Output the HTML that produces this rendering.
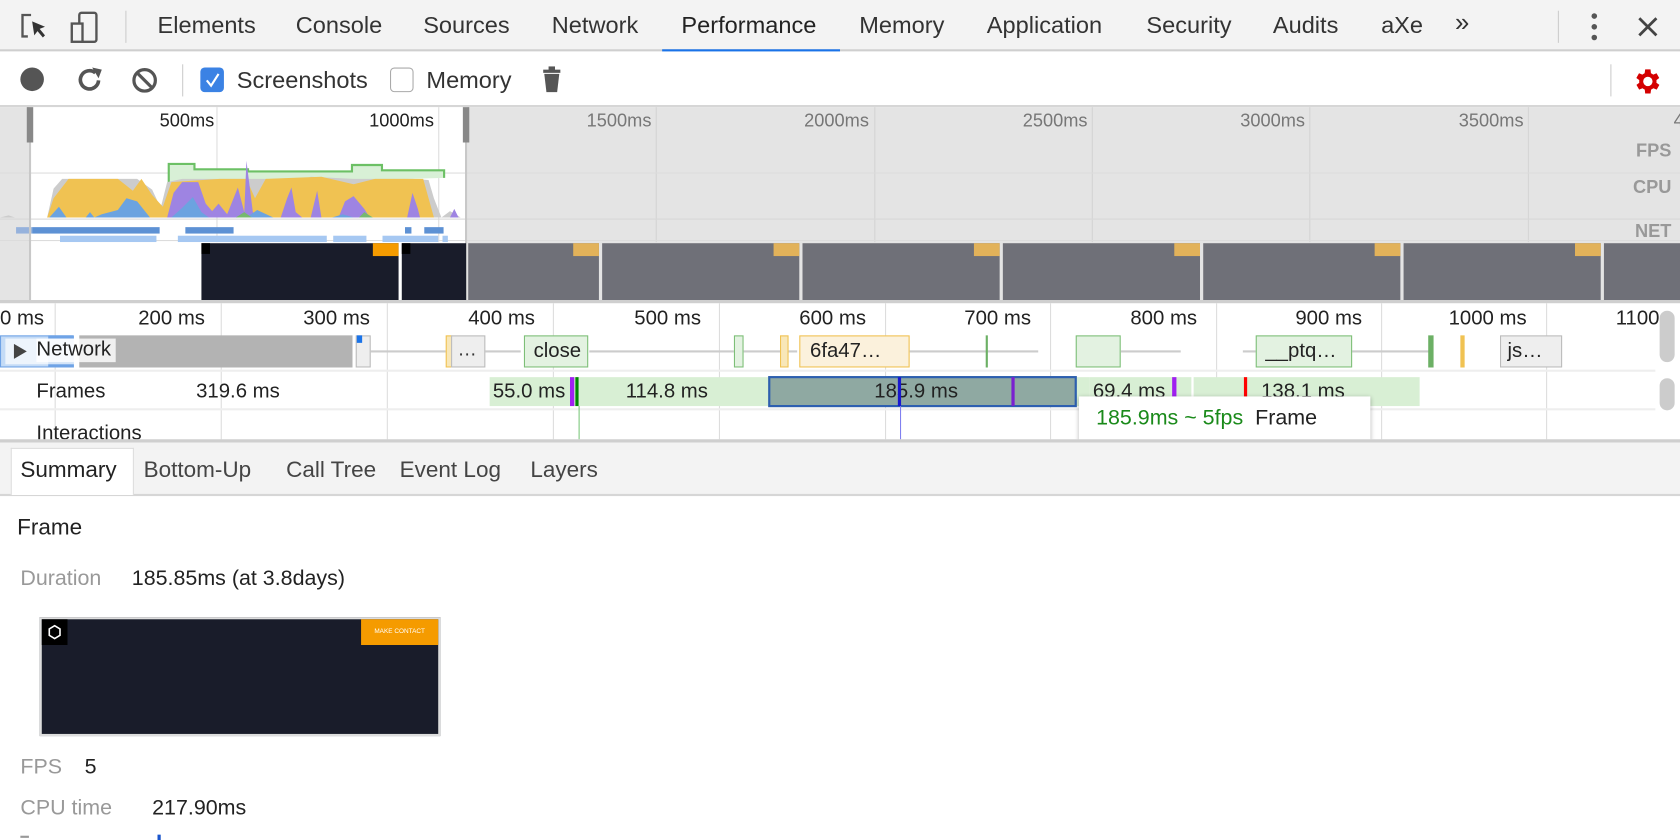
<!DOCTYPE html>
<html><head><meta charset="utf-8"><style>
*{box-sizing:border-box;margin:0;padding:0}
html,body{width:1680px;height:840px;overflow:hidden;background:#fff}
#w{position:absolute;left:0;top:0;width:1568px;height:784px;transform:scale(1.071429);transform-origin:0 0;font-family:"Liberation Sans",sans-serif;color:#333}
.a{position:absolute;white-space:nowrap}
.tab{position:absolute;top:11px;font-size:22px;color:#333}
.lbl{font-size:19px;color:#222}
.rl{position:absolute;top:287px;font-size:19px;color:#222}
.gl{position:absolute;width:1px;background:#ddd}
</style></head><body><div id="w">
<div class="a" style="left:0;top:0;width:1568px;height:48px;background:#f3f3f3;border-bottom:2px solid #cfcfcf"></div>
<svg class="a" style="left:16px;top:10px" width="90" height="32" viewBox="0 0 90 32"><path d="M13 4H5v20h5" fill="none" stroke="#555" stroke-width="2.2"/><path d="M14 10l12 5-5 2 5 6-2 2-5-6-3 4z" fill="#333"/><rect x="58" y="2" width="16" height="27" rx="2" fill="none" stroke="#555" stroke-width="2.2"/><rect x="51" y="12" width="10" height="17" fill="#f3f3f3" stroke="#555" stroke-width="2.2"/></svg>
<div class="a" style="left:117px;top:10px;width:1px;height:30px;background:#ccc"></div>
<div class="tab" style="left:147px">Elements</div>
<div class="tab" style="left:276px">Console</div>
<div class="tab" style="left:395px">Sources</div>
<div class="tab" style="left:515px">Network</div>
<div class="tab" style="left:636px;color:#222">Performance</div>
<div class="a" style="left:618px;top:46px;width:166px;height:3px;background:#1a73e8"></div>
<div class="tab" style="left:802px">Memory</div>
<div class="tab" style="left:921px">Application</div>
<div class="tab" style="left:1070px">Security</div>
<div class="tab" style="left:1188px">Audits</div>
<div class="tab" style="left:1289px">aXe</div>
<div class="tab" style="left:1358px;font-size:24px;top:8px">»</div>
<div class="a" style="left:1454px;top:10px;width:1px;height:30px;background:#ccc"></div>
<svg class="a" style="left:1480px;top:12px" width="16" height="28"><circle cx="8" cy="3" r="2.6" fill="#555"/><circle cx="8" cy="13" r="2.6" fill="#555"/><circle cx="8" cy="23" r="2.6" fill="#555"/></svg>
<svg class="a" style="left:1527px;top:14px" width="22" height="22"><path d="M3 3L19 19M19 3L3 19" stroke="#444" stroke-width="2.6"/></svg>
<div class="a" style="left:0;top:48px;width:1568px;height:52px;background:#fff;border-bottom:2px solid #d6d6d6"></div>
<svg class="a" style="left:16px;top:60px" width="520" height="30"><circle cx="14" cy="14" r="11" fill="#555"/><path d="M73 8a8.5 8.5 0 1 0 3 7" fill="none" stroke="#555" stroke-width="3.4"/><path d="M70 3l9 2-3 8z" fill="#555"/><circle cx="119" cy="15" r="10" fill="none" stroke="#555" stroke-width="3"/><path d="M112 8l14 14" stroke="#555" stroke-width="3"/><rect x="491" y="5" width="16" height="3" fill="#555"/><rect x="496" y="2" width="6" height="4" fill="#555"/><path d="M492 9h14l-2 17h-10z" fill="#555"/></svg>
<div class="a" style="left:170px;top:60px;width:1px;height:30px;background:#ccc"></div>
<div class="a" style="left:187px;top:63px;width:22px;height:23px;border-radius:4px;background:#3b82e4"></div>
<svg class="a" style="left:190px;top:66px" width="16" height="18"><path d="M3 9l4 5 7-11" fill="none" stroke="#fff" stroke-width="2"/></svg>
<div class="a lbl" style="left:221px;top:62px;font-size:22px;color:#333">Screenshots</div>
<div class="a" style="left:364px;top:63px;width:22px;height:23px;border-radius:4px;border:1px solid #aaa;background:#fff"></div>
<div class="a lbl" style="left:398px;top:62px;font-size:22px;color:#333">Memory</div>
<div class="a" style="left:1503px;top:60px;width:1px;height:30px;background:#ccc"></div>
<svg class="a" style="left:1523px;top:61px" width="30" height="30" viewBox="0 0 24 24"><path fill="#d40000" d="M19.4 13a7.5 7.5 0 0 0 0-2l2.1-1.6-2-3.5-2.5 1a7 7 0 0 0-1.7-1L15 3h-4l-.4 2.9a7 7 0 0 0-1.7 1l-2.5-1-2 3.5L6.6 11a7.5 7.5 0 0 0 0 2l-2.1 1.6 2 3.5 2.5-1a7 7 0 0 0 1.7 1L11 21h4l.4-2.9a7 7 0 0 0 1.7-1l2.5 1 2-3.5zM13 15.5a3.5 3.5 0 1 1 0-7 3.5 3.5 0 0 1 0 7z" transform="translate(-1 0)"/></svg>
<div class="a" style="left:0;top:100px;width:1568px;height:182px;background:#e4e4e4"></div>
<div class="a" style="left:27px;top:100px;width:409px;height:182px;background:#fff"></div>
<div class="gl" style="left:202px;top:100px;height:126px"></div>
<div class="gl" style="left:409px;top:100px;height:126px"></div>
<div class="gl" style="left:612px;top:100px;height:126px;background:#d4d4d4"></div>
<div class="gl" style="left:816px;top:100px;height:126px;background:#d4d4d4"></div>
<div class="gl" style="left:1019px;top:100px;height:126px;background:#d4d4d4"></div>
<div class="gl" style="left:1222px;top:100px;height:126px;background:#d4d4d4"></div>
<div class="gl" style="left:1426px;top:100px;height:126px;background:#d4d4d4"></div>
<div class="a" style="left:0;top:161px;width:1568px;height:1px;background:#dcdcdc"></div>
<div class="a" style="left:0;top:204px;width:1568px;height:1px;background:#d8d8d8"></div>
<div class="a" style="left:0;top:224px;width:1568px;height:1px;background:#dcdcdc"></div>
<div class="a" style="left:140px;top:103px;width:60px;text-align:right;font-size:17px;color:#222">500ms</div>
<div class="a" style="left:330px;top:103px;width:75px;text-align:right;font-size:17px;color:#222">1000ms</div>
<div class="a" style="left:530px;top:103px;width:78px;text-align:right;font-size:17px;color:#777">1500ms</div>
<div class="a" style="left:733px;top:103px;width:78px;text-align:right;font-size:17px;color:#777">2000ms</div>
<div class="a" style="left:937px;top:103px;width:78px;text-align:right;font-size:17px;color:#777">2500ms</div>
<div class="a" style="left:1140px;top:103px;width:78px;text-align:right;font-size:17px;color:#777">3000ms</div>
<div class="a" style="left:1344px;top:103px;width:78px;text-align:right;font-size:17px;color:#777">3500ms</div>
<div class="a" style="left:1562px;top:103px;font-size:17px;color:#777">4</div>
<div class="a" style="left:1500px;top:131px;width:60px;text-align:right;font-size:17px;font-weight:bold;color:#999">FPS</div>
<div class="a" style="left:1500px;top:165px;width:60px;text-align:right;font-size:17px;font-weight:bold;color:#999">CPU</div>
<div class="a" style="left:1500px;top:206px;width:60px;text-align:right;font-size:17px;font-weight:bold;color:#999">NET</div>
<svg class="a" style="left:0;top:140px" width="440" height="86">
<path d="M157.5 33.5V13h24v5h50v2h97v-6h28v5h58v7" fill="#d8f0d6" stroke="#6cc065" stroke-width="2"/>
<path d="M0 63L8 61 14 63 44 63 50 36 58 27 128 27 142 37 150 54 156 30 170 27 250 27 268 35 290 25 330 27 385 27 400 28 405 45 412 63 420 57 430 63 440 63Z" fill="#cccccc"/>
<path d="M44 63L50 45 64 27 110 27 124 38 132 27 142 42 152 53 160 30 205 27 230 27 238 45 248 27 300 25 330 32 350 27 395 27 400 45 405 63Z" fill="#f0c252"/>
<path d="M156 63 162 40 170 30 185 30 192 50 198 57 204 50 212 60 222 35 228 58 230 10 236 58 240 63Z M262 63 268 45 272 35 276 58 282 63Z M316 63 322 48 330 43 340 55 345 63Z M290 63 296 38 300 63Z M380 63 385 40 390 55 392 63Z M420 63 424 55 428 63Z" fill="#9e84e2"/>
<path d="M46 63 55 53 62 63 80 63 84 58 88 63 95 60 110 56 118 45 128 48 140 63Z M160 63 170 54 180 44 188 58 195 63Z M230 63 240 56 255 63Z M310 63 320 60 330 63Z" fill="#6ba3e0"/>
<path d="M220 63 228 58 235 63Z M335 63 340 58 348 63Z" fill="#76b86f"/>
<rect x="15" y="72" width="15" height="6" fill="#96b2dc"/><rect x="30" y="72" width="119" height="6" fill="#5d91d4"/><rect x="173" y="72" width="45" height="6" fill="#5d91d4"/><rect x="378" y="72" width="6" height="6" fill="#5d91d4"/><rect x="396" y="72" width="18" height="6" fill="#5d91d4"/>
<rect x="56" y="80" width="90" height="6" fill="#a6c8f2"/><rect x="166" y="80" width="139" height="6" fill="#a6c8f2"/><rect x="311" y="80" width="31" height="6" fill="#a6c8f2"/><rect x="357" y="80" width="52" height="6" fill="#a6c8f2"/><rect x="413" y="80" width="5" height="6" fill="#a6c8f2"/>
</svg>
<div class="a" style="left:25px;top:100px;width:6px;height:33px;background:#888"></div>
<div class="a" style="left:432px;top:100px;width:6px;height:33px;background:#888"></div>
<div class="a" style="left:27px;top:133px;width:2px;height:149px;background:#c8c8c8"></div>
<div class="a" style="left:434px;top:133px;width:2px;height:149px;background:#c8c8c8"></div>
<div class="a" style="left:188px;top:227px;width:184px;height:53px;background:#191c2a"><div class="a" style="left:0;top:0;width:8px;height:10px;background:#000"></div><div class="a" style="right:0;top:0;width:24px;height:12px;background:#f59b00"></div></div>
<div class="a" style="left:375px;top:227px;width:60px;height:53px;background:#191c2a"><div class="a" style="left:0;top:0;width:8px;height:10px;background:#000"></div></div>
<div class="a" style="left:437px;top:227px;width:122px;height:53px;background:#6f7078"><div class="a" style="right:0;top:0;width:24px;height:12px;background:#e2b25a"></div></div>
<div class="a" style="left:562px;top:227px;width:184px;height:53px;background:#6f7078"><div class="a" style="right:0;top:0;width:24px;height:12px;background:#e2b25a"></div></div>
<div class="a" style="left:749px;top:227px;width:184px;height:53px;background:#6f7078"><div class="a" style="right:0;top:0;width:24px;height:12px;background:#e2b25a"></div></div>
<div class="a" style="left:936px;top:227px;width:184px;height:53px;background:#6f7078"><div class="a" style="right:0;top:0;width:24px;height:12px;background:#e2b25a"></div></div>
<div class="a" style="left:1123px;top:227px;width:184px;height:53px;background:#6f7078"><div class="a" style="right:0;top:0;width:24px;height:12px;background:#e2b25a"></div></div>
<div class="a" style="left:1310px;top:227px;width:184px;height:53px;background:#6f7078"><div class="a" style="right:0;top:0;width:24px;height:12px;background:#e2b25a"></div></div>
<div class="a" style="left:1497px;top:227px;width:71px;height:53px;background:#6f7078"></div>
<div class="a" style="left:0;top:280px;width:1568px;height:3px;background:#cfcfcf"></div>
<div class="gl" style="left:51px;top:283px;height:128px"></div>
<div class="gl" style="left:206px;top:283px;height:128px"></div>
<div class="gl" style="left:361px;top:283px;height:128px"></div>
<div class="gl" style="left:516px;top:283px;height:128px"></div>
<div class="gl" style="left:671px;top:283px;height:128px"></div>
<div class="gl" style="left:826px;top:283px;height:128px"></div>
<div class="gl" style="left:980px;top:283px;height:128px"></div>
<div class="gl" style="left:1135px;top:283px;height:128px"></div>
<div class="gl" style="left:1289px;top:283px;height:128px"></div>
<div class="gl" style="left:1443px;top:283px;height:128px"></div>
<div class="rl" style="left:0">0 ms</div>
<div class="rl" style="left:129px">200 ms</div>
<div class="rl" style="left:283px">300 ms</div>
<div class="rl" style="left:437px">400 ms</div>
<div class="rl" style="left:592px">500 ms</div>
<div class="rl" style="left:746px">600 ms</div>
<div class="rl" style="left:900px">700 ms</div>
<div class="rl" style="left:1055px">800 ms</div>
<div class="rl" style="left:1209px">900 ms</div>
<div class="rl" style="left:1352px">1000 ms</div>
<div class="rl" style="left:1508px">1100</div>
<div class="a" style="left:0;top:345px;width:1545px;height:2px;background:#eee"></div>
<div class="a" style="left:0;top:381px;width:1545px;height:2px;background:#eee"></div>
<div class="a" style="left:0;top:313px;width:68px;height:30px;background:#c4dbf6;border:1px solid #6fa3e6"></div>
<div class="a" style="left:45px;top:313px;width:24px;height:30px;background:#6fa3e6"></div>
<div class="a" style="left:5px;top:316px;width:76px;height:24px;background:rgba(255,255,255,.7)"></div>
<div class="a" style="left:74px;top:313px;width:255px;height:30px;background:#b3b3b3"></div>
<div class="a" style="left:332px;top:313px;width:14px;height:30px;background:#eee;border:1px solid #bbb"></div>
<div class="a" style="left:333px;top:313px;width:5px;height:7px;background:#1a73e8"></div>
<div class="a" style="left:346px;top:327px;width:140px;height:2px;background:#ccc"></div>
<div class="a" style="left:416px;top:313px;width:6px;height:30px;background:#f8e7b8;border:1px solid #f0c252"></div>
<div class="a" style="left:421px;top:313px;width:32px;height:30px;background:#eee;border:1px solid #bbb;font-size:18px;padding:2px 0 0 5px">…</div>
<div class="a" style="left:489px;top:313px;width:60px;height:30px;background:#e3f2e1;border:1px solid #7dbf77;font-size:19px;padding:3px 0 0 8px;color:#222">close</div>
<div class="a" style="left:550px;top:327px;width:135px;height:2px;background:#ccc"></div>
<div class="a" style="left:685px;top:313px;width:9px;height:30px;background:#e3f2e1;border:1px solid #7dbf77"></div>
<div class="a" style="left:694px;top:327px;width:50px;height:2px;background:#ccc"></div>
<div class="a" style="left:728px;top:313px;width:8px;height:30px;background:#f8e7b8;border:1px solid #f0c252"></div>
<div class="a" style="left:746px;top:313px;width:103px;height:30px;background:#fbf1dc;border:1px solid #f0c252;font-size:19px;padding:3px 0 0 9px;color:#222">6fa47…</div>
<div class="a" style="left:849px;top:327px;width:120px;height:2px;background:#ccc"></div>
<div class="a" style="left:920px;top:313px;width:2px;height:30px;background:#6cb065"></div>
<div class="a" style="left:1004px;top:313px;width:42px;height:30px;background:#e3f2e1;border:1px solid #7dbf77"></div>
<div class="a" style="left:1046px;top:327px;width:56px;height:2px;background:#ccc"></div>
<div class="a" style="left:1160px;top:327px;width:176px;height:2px;background:#ccc"></div>
<div class="a" style="left:1172px;top:313px;width:90px;height:30px;background:#e3f2e1;border:1px solid #7dbf77;font-size:19px;padding:3px 0 0 8px;color:#222">__ptq…</div>
<div class="a" style="left:1333px;top:313px;width:5px;height:30px;background:#6cb065"></div>
<div class="a" style="left:1363px;top:313px;width:4px;height:30px;background:#f0c252"></div>
<div class="a" style="left:1400px;top:313px;width:58px;height:30px;background:#eee;border:1px solid #bbb;font-size:19px;padding:3px 0 0 6px;color:#222">js…</div>
<svg class="a" style="left:12px;top:320px" width="14" height="16"><path d="M1 1L13 8 1 15z" fill="#444"/></svg>
<div class="a lbl" style="left:34px;top:316px;background:rgba(255,255,255,.8);padding:0 4px 0 0">Network</div>
<div class="a lbl" style="left:34px;top:355px">Frames</div>
<div class="a lbl" style="left:183px;top:355px">319.6 ms</div>
<div class="a" style="left:457px;top:352px;width:560px;height:27px;background:#d8efd4"></div>
<div class="a" style="left:1114px;top:352px;width:211px;height:27px;background:#d8efd4"></div>
<div class="a" style="left:1017px;top:352px;width:95px;height:27px;background:#d8efd4"></div>
<div class="a" style="left:1112px;top:352px;width:2px;height:27px;background:#fff"></div>
<div class="a lbl" style="left:460px;top:355px">55.0 ms</div>
<div class="a" style="left:532px;top:352px;width:4px;height:27px;background:#a020f0"></div>
<div class="a" style="left:537px;top:352px;width:3px;height:27px;background:#080"></div>
<div class="a" style="left:540px;top:379px;width:1px;height:32px;background:#7bc77a"></div>
<div class="a lbl" style="left:584px;top:355px">114.8 ms</div>
<div class="a" style="left:717px;top:351px;width:288px;height:29px;background:#8fa9a2;border:2px solid #2d5fb0"></div>
<div class="a lbl" style="left:816px;top:355px">185.9 ms</div>
<div class="a" style="left:838px;top:352px;width:3px;height:27px;background:#1818d0"></div>
<div class="a" style="left:840px;top:379px;width:1px;height:32px;background:#8080f0"></div>
<div class="a" style="left:944px;top:352px;width:3px;height:27px;background:#7a20d0"></div>
<div class="a lbl" style="left:1020px;top:355px">69.4 ms</div>
<div class="a" style="left:1094px;top:352px;width:4px;height:27px;background:#a020f0"></div>
<div class="a" style="left:1161px;top:352px;width:3px;height:27px;background:#f00"></div>
<div class="a lbl" style="left:1177px;top:355px">138.1 ms</div>
<div class="a lbl" style="left:34px;top:394px">Interactions</div>
<div class="a" style="left:1007px;top:370px;width:272px;height:42px;background:#fff;box-shadow:0 1px 4px rgba(0,0,0,.3)"></div>
<div class="a" style="left:1023px;top:379px;font-size:20px;color:#1a8a1a">185.9ms ~ 5fps <span style="color:#222">&nbsp;Frame</span></div>
<div class="a" style="left:1549px;top:290px;width:14px;height:48px;border-radius:7px;background:#ccc"></div>
<div class="a" style="left:1549px;top:353px;width:14px;height:30px;border-radius:7px;background:#ccc"></div>
<div class="a" style="left:0;top:410px;width:1568px;height:53px;background:#f3f3f3;border-top:3px solid #cfcfcf;border-bottom:2px solid #d6d6d6"></div>
<div class="a" style="left:10px;top:418px;width:115px;height:44px;background:#fff;border:1px solid #ddd;border-bottom:none"></div>
<div class="a" style="left:19px;top:427px;font-size:21px;color:#222">Summary</div>
<div class="a" style="left:134px;top:427px;font-size:21px;color:#444">Bottom-Up</div>
<div class="a" style="left:267px;top:427px;font-size:21px;color:#444">Call Tree</div>
<div class="a" style="left:373px;top:427px;font-size:21px;color:#444">Event Log</div>
<div class="a" style="left:495px;top:427px;font-size:21px;color:#444">Layers</div>
<div class="a" style="left:16px;top:481px;font-size:21px;color:#222">Frame</div>
<div class="a" style="left:19px;top:529px;font-size:20px;color:#999">Duration</div>
<div class="a" style="left:123px;top:529px;font-size:20px;color:#222">185.85ms (at 3.8days)</div>
<div class="a" style="left:37px;top:576px;width:374px;height:111px;background:#191c2a;border:2px solid #ddd">
<div class="a" style="left:0;top:0;width:24px;height:24px;background:#000"></div>
<svg class="a" style="left:5px;top:5px" width="14" height="14"><path d="M7 1l5 3v6l-5 3-5-3V4z" fill="none" stroke="#fff" stroke-width="1.5"/></svg>
<div class="a" style="right:0;top:0;width:72px;height:24px;background:#f59b00;font-size:6px;color:#fff;text-align:center;line-height:24px">MAKE CONTACT</div>
</div>
<div class="a" style="left:19px;top:705px;font-size:20px;color:#999">FPS</div>
<div class="a" style="left:79px;top:705px;font-size:20px;color:#222">5</div>
<div class="a" style="left:19px;top:743px;font-size:20px;color:#999">CPU time</div>
<div class="a" style="left:142px;top:743px;font-size:20px;color:#222">217.90ms</div>
<div class="a" style="left:19px;top:780px;width:8px;height:2px;background:#999"></div>
<div class="a" style="left:147px;top:779px;width:3px;height:5px;background:#1a55cc"></div>
</div></body></html>
